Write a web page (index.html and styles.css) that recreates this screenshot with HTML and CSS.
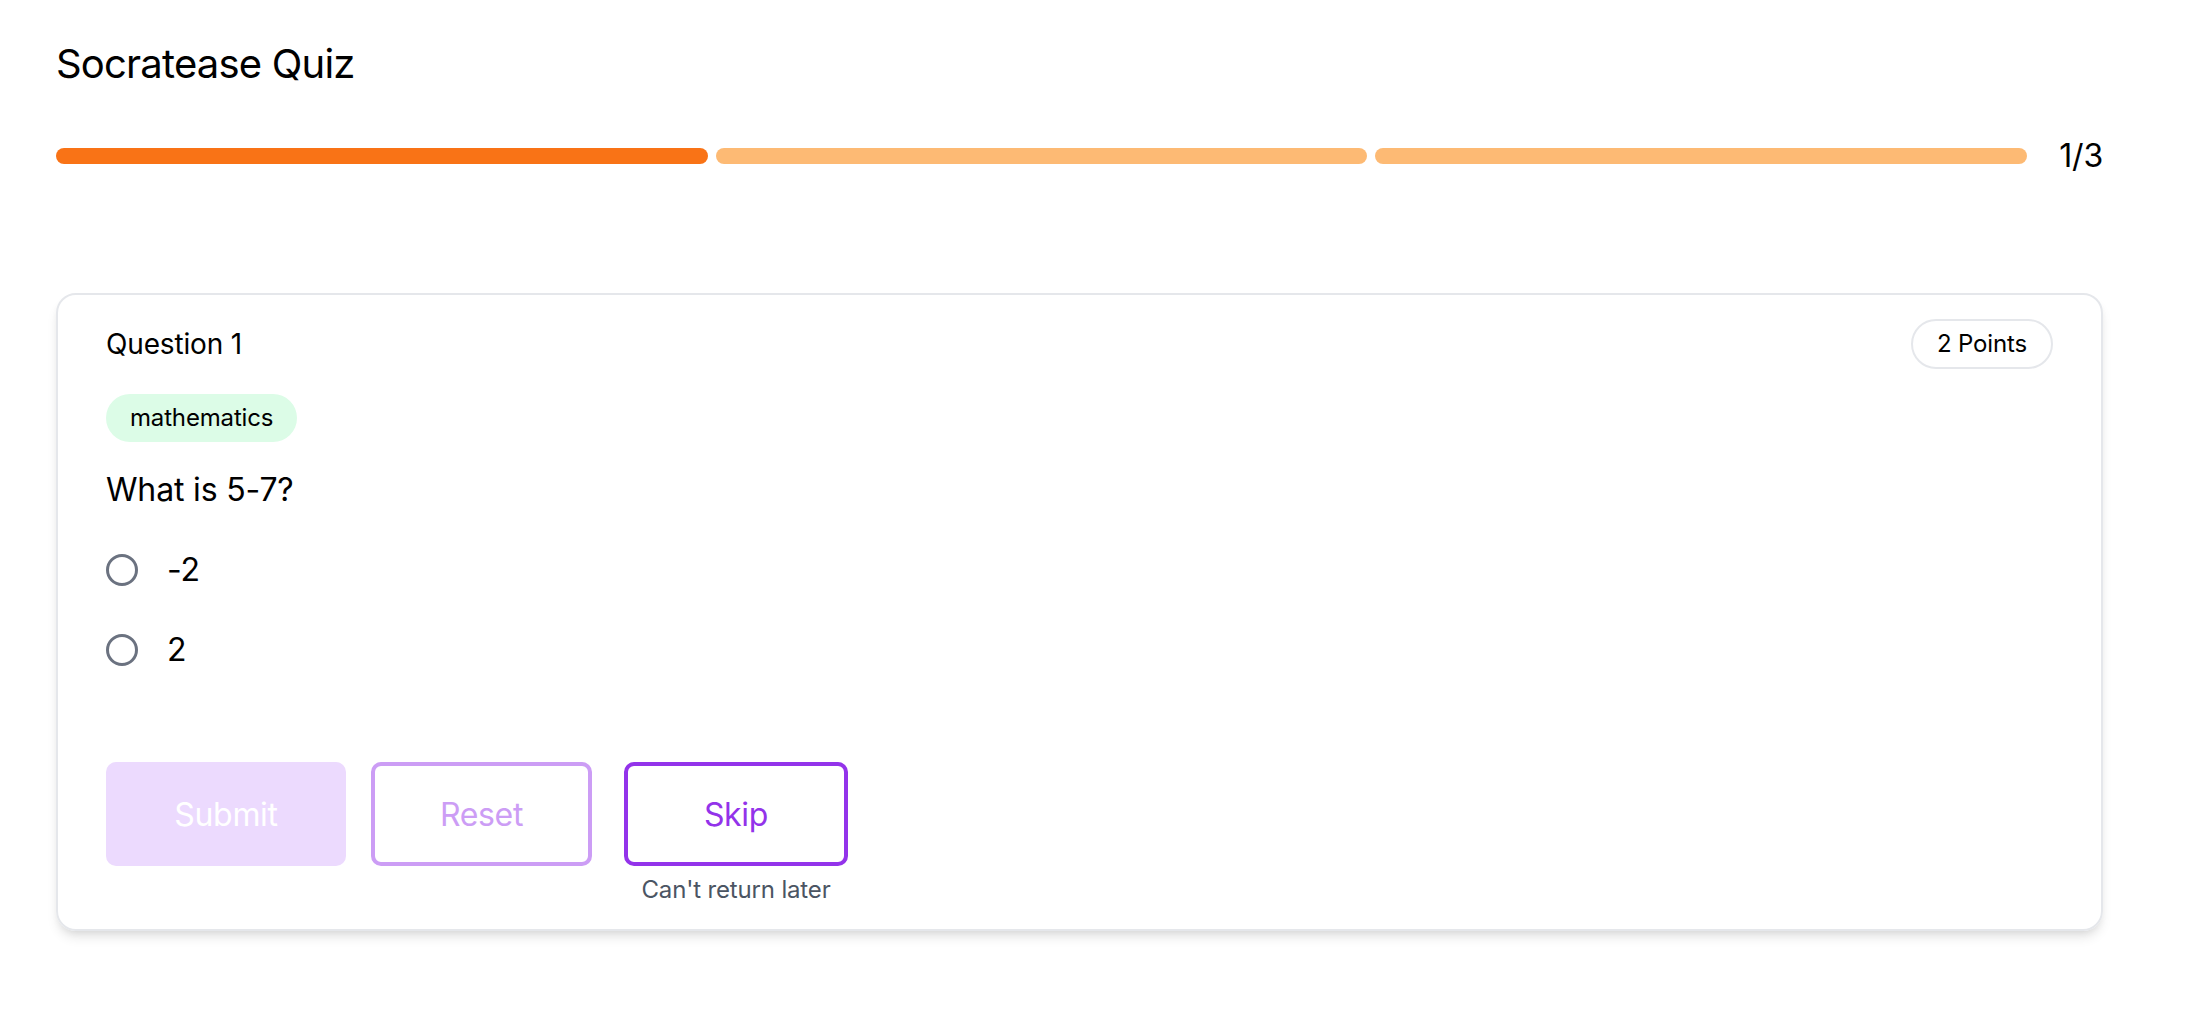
FILE: index.html
```html
<!DOCTYPE html>
<html lang="en">
<head>
    <meta charset="UTF-8">
    <meta name="viewport" content="width=device-width, initial-scale=1.0">
    <title>Socratease Quiz</title>
    <link rel="stylesheet" href="styles.css">
</head>
<body>
    <div class="page">
        <h1 class="title">Socratease Quiz</h1>

        <div class="progress">
            <div class="bars">
                <span class="bar done"></span>
                <span class="bar"></span>
                <span class="bar"></span>
            </div>
            <span class="count">1/3</span>
        </div>

        <div class="card">
            <div class="card-head">
                <span class="qnum">Question 1</span>
                <span class="points">2 Points</span>
            </div>
            <span class="tag">mathematics</span>
            <p class="question">What is 5-7?</p>

            <ul class="options">
                <li><label><input type="radio" name="q1" value="-2"> <span>-2</span></label></li>
                <li><label><input type="radio" name="q1" value="2"> <span>2</span></label></li>
            </ul>

            <div class="actions">
                <button class="btn submit" disabled>Submit</button>
                <button class="btn reset" disabled>Reset</button>
                <div class="skip-box">
                    <button class="btn skip">Skip</button>
                    <span class="hint">Can't return later</span>
                </div>
            </div>
        </div>
    </div>
</body>
</html>
```

FILE: styles.css
```css
body{
    margin: 0;
    background: #fff;
    font-family: Inter, "Noto Sans", sans-serif;
    color: #000;
    letter-spacing: -0.01em;
}
.page{
    padding: 36px 103px 40px 56px;
}
.title{
    margin: 0;
    font-size: 40px;
    line-height: 56px;
    font-weight: 400;
    letter-spacing: -0.02em;
}

/* progress */
.progress{
    display: flex;
    align-items: center;
    gap: 32px;
    margin-top: 40px;
    height: 48px;
}
.bars{
    flex: 1;
    display: flex;
    gap: 8px;
}
.bar{
    flex: 1;
    height: 16px;
    border-radius: 8px;
    background: #fdba74;
}
.bar.done{
    background: #f97316;
}
.count{
    font-size: 32px;
    line-height: 48px;
}

/* card */
.card{
    margin-top: 113px;
    border: 2px solid #e5e7eb;
    border-radius: 20px;
    padding: 24px 48px 23px;
    box-shadow: 0 8px 12px -2px rgba(0,0,0,.1), 0 4px 8px -4px rgba(0,0,0,.1);
}
.card-head{
    display: flex;
    justify-content: space-between;
    align-items: center;
}
.qnum{
    font-size: 28px;
    line-height: 40px;
}
.points{
    font-size: 24px;
    line-height: 32px;
    padding: 7px 24px;
    border: 2px solid #e5e7eb;
    border-radius: 999px;
}
.tag{
    display: inline-block;
    margin-top: 25px;
    font-size: 24px;
    line-height: 32px;
    padding: 8px 24px;
    border-radius: 999px;
    background: #dcfce7;
}
.question{
    margin: 24px 0 0;
    font-size: 32px;
    line-height: 48px;
}
.options{
    list-style: none;
    margin: 32px 0 0;
    padding: 0;
    display: flex;
    flex-direction: column;
    gap: 32px;
}
.options label{
    display: flex;
    align-items: center;
    gap: 29px;
    font-size: 32px;
    line-height: 48px;
}
.options input{
    appearance: none;
    -webkit-appearance: none;
    margin: 0;
    width: 32px;
    height: 32px;
    border: 3px solid #6b7280;
    border-radius: 50%;
    background: #fff;
}

/* buttons */
.actions{
    display: flex;
    align-items: flex-start;
    margin-top: 88px;
}
.btn{
    height: 104px;
    font-family: Inter, "Noto Sans", sans-serif;
    font-size: 32px;
    letter-spacing: -0.01em;
    border-radius: 10px;
    background: #fff;
    cursor: pointer;
}
.submit{
    width: 240px;
    border: none;
    background: #ecdafe;
    color: #fff;
}
.reset{
    width: 221px;
    margin-left: 25px;
    border: 4px solid #cc9df5;
    color: #cc9df5;
}
.skip-box{
    margin-left: 32px;
    display: flex;
    flex-direction: column;
    align-items: center;
    gap: 8px;
}
.skip{
    width: 224px;
    border: 4px solid #9333ea;
    color: #9333ea;
}
.hint{
    font-size: 24px;
    line-height: 32px;
    color: #4b5563;
}
```
